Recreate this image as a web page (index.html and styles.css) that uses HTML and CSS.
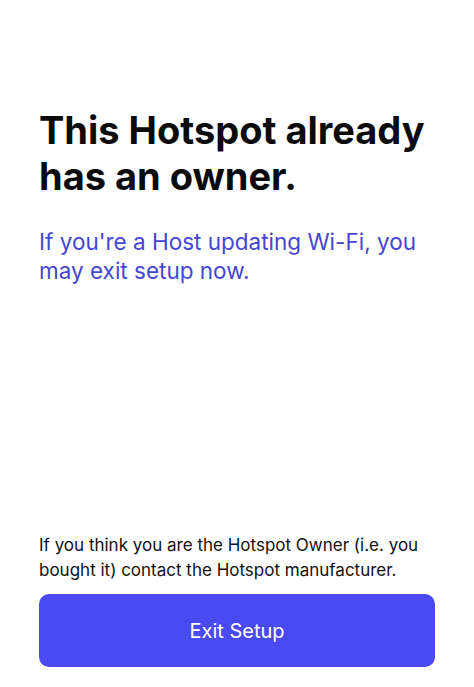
FILE: index.html
```html
<!DOCTYPE html>
<html>
<head>
<meta charset="utf-8">
<link rel="stylesheet" href="styles.css">
</head>
<body>
<main class="screen">
  <section class="top">
    <h1 class="title">This Hotspot already has an owner.</h1>
    <p class="subtitle">If you're a Host updating Wi-Fi, you may exit setup now.</p>
  </section>
  <section class="bottom">
    <p class="note">If you think you are the Hotspot Owner (i.e. you bought it) contact the Hotspot manufacturer.</p>
    <button class="exit-btn" type="button">Exit Setup</button>
  </section>
</main>
</body>
</html>
```
FILE: styles.css
```css
html, body {
  margin: 0;
  padding: 0;
  background: #ffffff;
}
body {
  font-family: Inter, "Noto Sans", sans-serif;
  -webkit-font-smoothing: antialiased;
}
.screen {
  box-sizing: border-box;
  height: 687px;
  padding: 107px 39px 20px 39px;
  display: flex;
  flex-direction: column;
  justify-content: space-between;
}
.title {
  margin: 0;
  font-size: 38px;
  line-height: 46px;
  font-weight: 700;
  letter-spacing: 0;
  color: #0a0a0a;
  width: 396px;
}
.subtitle {
  margin: 28px 0 0 0;
  font-size: 22.5px;
  line-height: 29px;
  color: #4646d2;
  width: 396px;
}
.bottom {
  display: flex;
  flex-direction: column;
}
.note {
  margin: 0 0 11px 0;
  font-size: 17px;
  line-height: 25px;
  color: #111111;
}
.exit-btn {
  height: 73px;
  border: none;
  border-radius: 10px;
  background: #4a4af2;
  color: #ffffff;
  font-family: Inter, "Noto Sans", sans-serif;
  font-size: 20px;
  font-weight: 400;
}
```
